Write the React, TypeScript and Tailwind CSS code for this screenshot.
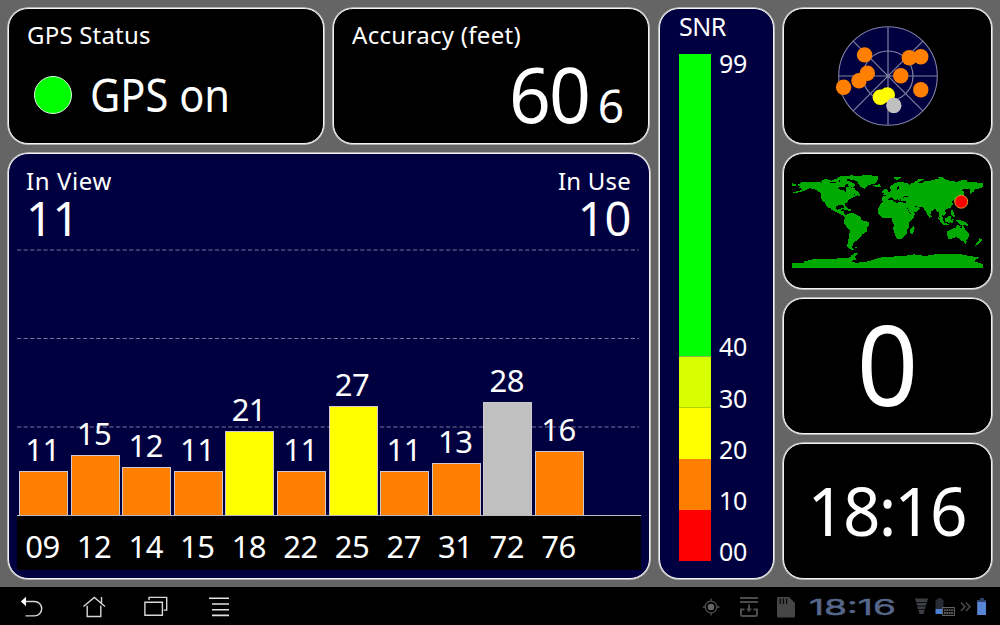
import type { ReactNode } from "react";

type Satellite = { id: string; snr: number; height: number; color: string };

const ORANGE = "#ff8000";
const YELLOW = "#ffff00";
const SILVER = "#c0c0c0";

const SATELLITES: Satellite[] = [
  { id: "09", snr: 11, height: 44, color: ORANGE },
  { id: "12", snr: 15, height: 60, color: ORANGE },
  { id: "14", snr: 12, height: 48.5, color: ORANGE },
  { id: "15", snr: 11, height: 44, color: ORANGE },
  { id: "18", snr: 21, height: 84.5, color: YELLOW },
  { id: "22", snr: 11, height: 44, color: ORANGE },
  { id: "25", snr: 27, height: 109, color: YELLOW },
  { id: "27", snr: 11, height: 44, color: ORANGE },
  { id: "31", snr: 13, height: 52.5, color: ORANGE },
  { id: "72", snr: 28, height: 113.5, color: SILVER },
  { id: "76", snr: 16, height: 64.5, color: ORANGE },
];

const SKY_DOTS = [
  { x: -23.4, y: -21.1, color: ORANGE },
  { x: 21.3, y: -18.3, color: ORANGE },
  { x: 32.8, y: -19.3, color: ORANGE },
  { x: 12.8, y: -0.3, color: ORANGE },
  { x: -20.7, y: -2.8, color: ORANGE },
  { x: -29, y: 4.7, color: ORANGE },
  { x: -44.4, y: 11.2, color: ORANGE },
  { x: 32.8, y: 13.7, color: ORANGE },
  { x: -0.7, y: 18.9, color: YELLOW },
  { x: -7.7, y: 21.2, color: YELLOW },
  { x: 5.8, y: 29.5, color: SILVER },
];

// longitude / negated latitude outlines
const LAND = [
  // North America
  "-168,-66 -162,-70 -156,-71 -141,-70 -128,-70 -115,-68 -108,-69 -96,-69 -94,-72 -88,-70 -82,-70 -82,-67 -87,-65 -94,-61 -94,-58 -88,-56 -82,-55 -81,-52 -79,-51 -77,-56 -78,-62 -72,-62 -68,-58 -64,-60 -60,-55 -56,-52 -60,-50 -66,-50 -64,-47 -60,-46 -66,-43 -70,-43 -70,-41 -74,-40 -76,-35 -81,-31 -80,-25 -82,-27 -84,-30 -90,-29 -97,-28 -98,-22 -95,-18 -91,-19 -87,-21 -89,-16 -83,-15 -83,-10 -79,-9 -77,-8 -80,-7 -86,-11 -92,-14 -97,-16 -105,-20 -106,-23 -112,-30 -114,-31 -110,-23 -115,-28 -118,-34 -123,-38 -124,-46 -123,-49 -130,-55 -137,-59 -146,-61 -152,-59 -160,-55 -165,-54 -157,-58 -165,-61 -164,-64",
  "-180,-68 -176,-67 -172,-65 -180,-65",
  "-178,-52 -170,-53 -165,-54 -170,-52.5",
  // Canadian islands
  "-125,-72 -118,-76 -110,-75 -105,-73 -115,-70",
  "-105,-73 -98,-76 -92,-75 -96,-72",
  "-90,-71 -88,-74 -78,-74 -68,-70 -61,-66 -65,-62 -74,-65 -72,-68 -80,-70",
  "-95,-77 -88,-82 -65,-83 -63,-82 -75,-78 -82,-76",
  "-87,-65 -80,-66 -82,-63 -86,-63",
  // Greenland
  "-73,-78 -60,-82 -35,-83.5 -18,-81 -20,-75 -24,-70 -38,-66 -43,-60 -50,-63 -54,-69 -58,-75",
  "-24,-65 -15,-66 -14,-64 -20,-63",
  // Caribbean
  "-85,-22 -78,-23 -74,-20 -69,-19 -69,-18 -78,-19.5",
  "-59,-48 -56,-51 -53,-47",
  // South America
  "-77,-8 -72,-12 -62,-11 -52,-5 -50,0 -44,3 -37,4.5 -35,8 -39,14 -40,21 -48,26 -53,33 -57,35 -58,38 -62,39 -65,42 -66,46 -68,51 -65,55 -71,54 -75,50 -73,40 -71,30 -70,18 -76,13 -81,5 -80,-2",
  "-61,51.5 -58,51.5 -58,52.5 -61,52.5",
  // Africa
  "-17,-21 -13,-28 -6,-36 10,-37 11,-33 20,-31 22,-33 34,-31 36,-23 39,-15 43,-11 51,-12 48,-4 40,3 40,12 35,20 35,25 31,30 26,34 19,35 15,27 12,17 13,8 9,1 9,-4 -8,-4.5 -13,-9 -17,-14",
  "44,17 49,12 50,16 47,25 44,24",
  // Eurasia
  "-9,-37 -9,-43 -2,-44 -1,-47 -5,-48 2,-51 8,-54 8,-57 11,-57 12,-54 20,-55 23,-59 30,-60 22,-61 25,-65 22,-66 17,-61 16,-57 13,-56 10,-59 5,-59 5,-62 14,-68 22,-71 30,-70 41,-67 33,-66 38,-64 44,-66 46,-68 60,-69 68,-68 70,-73 75,-72 82,-73 88,-75 104,-78 113,-74 130,-71 140,-73 160,-70 180,-69 180,-65 177,-62 170,-60 163,-58 162,-55 157,-51 156,-57 163,-62 155,-59 143,-59 136,-54 141,-52 140,-48 132,-43 128,-40 129,-35 126,-35 125,-39 118,-39 122,-37 119,-35 122,-30 118,-24 110,-21 106,-20 109,-13 105,-9 100,-13 104,-1.5 101,-3 98,-8 98,-16 94,-16 91,-22 87,-21 80,-15 80,-11 77,-8 73,-18 70,-21 67,-25 57,-26 50,-30 48,-30 52,-24 56,-24 60,-22 55,-17 45,-13 42,-17 35,-28 36,-36 27,-37 27,-40 34,-42 41,-42 38,-47 31,-46 28,-42 23,-40 23,-37 19,-42 13,-45 18,-40 15,-38 9,-44 3,-43 -2,-37 -6,-36",
  // British Isles, Japan, islands
  "-5,-50 1,-51 0,-54 -2,-58 -6,-58 -4,-54",
  "-10,-52 -6,-52 -6,-55 -10,-54",
  "52,-71 56,-71 68,-77 60,-76",
  "12,-80 26,-80 18,-77",
  "95,-80 104,-79 100,-78",
  "138,-75 150,-75 142,-73",
  "130,-31 136,-34 140,-35 142,-40 145,-44 141,-45 139,-38 132,-35",
  "142,-54 144,-49 142,-46",
  "80,-9 82,-7 80,-6",
  "95,-5 104,2 106,6 102,4",
  "105,7 115,8 115,9 106,8",
  "109,-2 117,-7 119,-5 116,4 110,3",
  "119,1 125,-1 121,2 123,5 120,5",
  "120,-18 122,-18 126,-7 122,-8",
  "131,1 141,2.5 148,6 151,10 144,8 138,8 133,4",
  // Oceania
  "114,22 122,18 129,15 132,11 137,12 136,15 140,17 142,11 146,19 153,26 151,34 147,39 140,38 135,34 131,31 124,33 116,35 114,30",
  "145,41 148,41 147,44",
  "173,35 178,38 174,42 167,47 168,44 173,40",
  // Antarctica
  "-180,82 -156,82 -156,79 -148,77 -135,74 -115,74 -100,74 -85,73 -75,73 -68,70 -67,67 -60,63 -57,63 -62,67 -61,74 -72,78 -60,82 -35,79 -20,74 -8,71 10,70 30,69 50,66 60,67 72,70 80,67 100,65 120,66 140,66 155,69 170,71 162,78 165,80 180,84 180,90 -180,90",
];

function Panel({ className, children }: { className: string; children: ReactNode }) {
  return (
    <section
      className={`rounded-[20px] border border-[#f2f2f2] shadow-[0_0_0_0.8px_#cfcfcf] ${className}`}
    >
      {children}
    </section>
  );
}

function SkyPlot() {
  return (
    <svg className="h-[104px] w-[110px]" viewBox="-55 -52 110 104">
      <circle r="49.3" fill="#000040" stroke="#8080a2" strokeWidth="1.1" />
      <g fill="none" stroke="#8080a2" strokeWidth="1.2">
        <circle r="25" />
        <path d="M0-49V49M-49 0H49M-34.8-34.8L34.8 34.8M-34.8 34.8L34.8-34.8" />
      </g>
      {SKY_DOTS.map((d, i) => (
        <circle key={i} cx={d.x} cy={d.y} r="7.7" fill={d.color} />
      ))}
    </svg>
  );
}

function WorldMap() {
  return (
    <svg className="h-[96px] w-[191px]" viewBox="-180 -90 360 180">
      <g fill="#00aa00" stroke="#00aa00" strokeWidth="2.2" shapeRendering="crispEdges">
        {LAND.map((points, i) => (
          <polygon key={i} points={points} />
        ))}
      </g>
      <circle cx="139" cy="-34.5" r="12.2" fill="#ff0000" stroke="#e0a030" strokeWidth="1.8" />
    </svg>
  );
}

function SatelliteChart() {
  return (
    <Panel className="relative h-[426px] w-[642px] bg-[#000040] text-white">
      <svg className="absolute top-0 left-0 h-[424px] w-[640px]">
        <path
          d="M8 96H630M8 184.500H630M8 273H630"
          stroke="#75759b"
          strokeWidth="1.2"
          strokeDasharray="4.2 2.4"
        />
      </svg>
      <div className="relative flex h-full flex-col">
        <div className="flex h-[86px] justify-between pt-[13px] pr-[18px] pl-[17px]">
          <div>
            <div className="text-[24px] leading-[28px] tracking-[0.6px]">In View</div>
            <div className="text-[47px] leading-[47px] tracking-[-0.3px]">11</div>
          </div>
          <div className="text-right">
            <div className="text-[24px] leading-[28px] tracking-[0.2px]">In Use</div>
            <div className="text-[47px] leading-[47px] tracking-[-0.3px]">10</div>
          </div>
        </div>
        <div className="ml-[8px] flex h-[276px] w-[624px] items-end gap-[2.6px] border-b border-[#b9b9c4] pl-[2px]">
          {SATELLITES.map((s) => (
            <div key={s.id} className="w-[49px] text-center">
              <div className="pr-[2px] text-[31px] leading-[43px] tracking-[-0.5px]">{s.snr}</div>
              <div
                className="border border-b-0 border-[#d0c8d0]"
                style={{ height: s.height, backgroundColor: s.color }}
              />
            </div>
          ))}
        </div>
        <div className="ml-[8px] flex h-[54px] w-[624px] gap-[2.6px] bg-black pl-[2px]">
          {SATELLITES.map((s) => (
            <div
              key={s.id}
              className="w-[49px] pr-[2px] text-center text-[31px] leading-[61px] tracking-[-0.5px]"
            >
              {s.id}
            </div>
          ))}
        </div>
      </div>
    </Panel>
  );
}

function SnrScale() {
  return (
    <Panel className="h-[571px] w-[115px] bg-[#000040] pl-[19px] text-white">
      <div className="h-[45px] text-[25px] leading-[34px] tracking-[-0.5px]">SNR</div>
      <div className="flex gap-[8px]">
        <div className="flex w-[32px] flex-col">
          <div className="h-[302px] bg-[#00ff00]" />
          <div className="h-[51px] border-t border-[#8fb84a] bg-[#d8ff00]" />
          <div className="h-[52px] border-t border-[#b8d000] bg-[#ffff00]" />
          <div className="h-[51px] bg-[#ff8000]" />
          <div className="h-[51px] bg-[#ff0000]" />
        </div>
        <div className="flex flex-col text-[25px] leading-[30px] tracking-[-0.3px]">
          <div className="-mt-[6px] mb-[253px]">99</div>
          <div className="mb-[21.5px]">40</div>
          <div className="mb-[21.5px]">30</div>
          <div className="mb-[21px]">20</div>
          <div className="mb-[21px]">10</div>
          <div>00</div>
        </div>
      </div>
    </Panel>
  );
}

function SystemBar() {
  return (
    <footer className="flex h-[38px] items-center justify-between bg-black">
      <div className="flex gap-[38.6px] pl-[19px]">
        <svg className="h-[38px] w-[24px]" viewBox="0 0 24 38" fill="none" stroke="#d8d8d8" strokeWidth="1.4">
          <path d="M6 14.5h9.500a7.200 7.200 0 0 1 0 14.400H6.500" />
          <path d="M1.800 14.500L7 9.800v9.400z" fill="#fff" stroke="none" />
        </svg>
        <svg className="h-[38px] w-[24px]" viewBox="0 0 24 38" fill="none" stroke="#d8d8d8" strokeWidth="1.4">
          <path d="M1.5 19.5L12.3 10.5L23 19.500M19.500 10v6M5.200 18.800v10.700h13.600V18.800" />
        </svg>
        <svg className="h-[38px] w-[24px]" viewBox="0 0 24 38" fill="none" stroke="#d8d8d8" strokeWidth="1.4">
          <path d="M.9 15.200h17.500v13H.9zM5 13v-2.600h17.700v12.700h-3" />
        </svg>
        <svg className="h-[38px] w-[24px]" viewBox="0 0 24 38" fill="none" stroke="#e0e0e0" strokeWidth="1.6">
          <path d="M2 11.300h20M5 17h17M5 22.700h17M5 28.400h17" />
        </svg>
      </div>
      <div className="flex items-center pr-[13px]">
        <svg className="mr-[19px] h-[38px] w-[18px]" viewBox="0 0 18 38" fill="none" stroke="#505050" strokeWidth="1.3">
          <circle cx="9" cy="20" r="5.8" />
          <circle cx="9" cy="20" r="3.3" fill="#666" stroke="none" />
          <path d="M9 11.5v3M9 25.500v3M.8 20h3M14.500 20h3" />
        </svg>
        <svg className="mr-[18px] h-[38px] w-[20px]" viewBox="0 0 20 38" fill="none" stroke="#4c4c4c" strokeWidth="2">
          <path d="M1 11h18M1 15h18M5.500 22.500H2v5q0 1.500 1.500 1.500h13q1.500 0 1.500-1.500v-5H14.500" />
          <path d="M10 17.500v4.500" />
          <path d="M7 21.500h6L10 25.200z" fill="#4c4c4c" stroke="none" />
        </svg>
        <svg className="mr-[14px] h-[38px] w-[18px]" viewBox="0 0 18 38">
          <path d="M1 10h11l6 6v13.500q0 1-1 1H1q-1 0-1-1V11q0-1 1-1z" fill="#464646" />
          <path d="M3.200 11.500v5.500M6.400 11.500v5.500M9.600 11.500v5.500" stroke="#0a0a0a" strokeWidth="1.3" />
        </svg>
        <svg className="mr-[18px] h-[38px] w-[87px]" viewBox="0 0 87 38">
          <text
            x="0"
            y="28"
            textLength="87"
            lengthAdjust="spacingAndGlyphs"
            className="fill-[#56678a] stroke-[#56678a] font-['Inter',sans-serif] text-[22px]"
            strokeWidth="0.4"
          >
            18:16
          </text>
        </svg>
        <svg className="mr-[5px] h-[38px] w-[15px]" viewBox="0 0 15 38">
          <path d="M1 11.500h13L9.500 27h-4z" fill="#3c3f44" />
          <path d="M0 15.500h15M0 19h15M0 22.500h15" stroke="#000" strokeWidth=".8" />
        </svg>
        <svg className="mr-[4px] h-[38px] w-[22px]" viewBox="0 0 22 38">
          <path d="M4 11h3.500v1.500h2V22H1.500v-9.500H4z" fill="#262b34" />
          <path d="M1.500 22h8v5h-8z" fill="#4a7ed2" />
          <path d="M8.500 20.500h12v8h-12z" fill="#0c0c0c" stroke="#626262" />
          <path d="M10 23.200h9M10 26h9" stroke="#808080" strokeWidth="1.3" strokeDasharray="1.6 .8" />
        </svg>
        <svg className="mr-[5px] h-[38px] w-[11px]" viewBox="0 0 11 38" fill="none" stroke="#4b4b4b" strokeWidth="1.5">
          <path d="M1 15.500l4 4.200-4 4.300M6 15.500l4 4.200-4 4.300" />
        </svg>
        <svg className="h-[38px] w-[11px]" viewBox="0 0 11 38">
          <path d="M4 11h3.500v2h2.500v15H1.200V13H4z" fill="#5985d8" />
          <path d="M4 11h3.500v2h2.500v2H1.200v-2H4z" fill="#2f4268" />
        </svg>
      </div>
    </footer>
  );
}

export default function App() {
  return (
    <div className="h-[625px] w-[1000px] overflow-hidden bg-[#656565] font-['Noto_Sans','Open_Sans',sans-serif]">
      <main className="flex h-[587px] gap-[9px] pt-[8px] pl-[8px]">
        <div className="flex w-[642px] flex-col gap-[9px]">
          <div className="flex gap-[9px]">
            <Panel className="h-[136px] w-[316px] bg-black px-[18px] pt-[12px] text-white">
              <h1 className="text-[24px] leading-[28px] tracking-[0.2px]">GPS Status</h1>
              <div className="mt-[14px] flex items-center pl-[7px]">
                <span className="size-[38px] rounded-full border border-[#d8ffd8] bg-[#00ff00]" />
                <span className="ml-[18px] origin-left scale-x-[0.925] text-[45px] leading-[64px]">
                  GPS on
                </span>
              </div>
            </Panel>
            <Panel className="h-[136px] w-[316px] bg-black pt-[12px] pl-[18px] text-white">
              <h2 className="text-[24px] leading-[28px] tracking-[0.3px]">Accuracy (feet)</h2>
              <div className="flex items-baseline justify-end pr-[24px]">
                <span className="origin-right scale-x-[0.965] text-[76px] leading-[90px] tracking-[-2px]">
                  60
                </span>
                <span className="ml-[9px] text-[46px] leading-[60px]">6</span>
              </div>
            </Panel>
          </div>
          <SatelliteChart />
        </div>
        <SnrScale />
        <div className="flex w-[209px] flex-col gap-[9px] text-white">
          <Panel className="flex h-[136px] items-center justify-center bg-black">
            <SkyPlot />
          </Panel>
          <Panel className="flex h-[136px] justify-center bg-black pt-[18px]">
            <WorldMap />
          </Panel>
          <Panel className="h-[136px] bg-black text-center text-[112px] leading-[128px]">
            <div className="scale-x-[0.96]">0</div>
          </Panel>
          <Panel className="h-[136px] bg-black text-center text-[67px] leading-[132px] tracking-[-2px]">
            <div className="-ml-[2px] scale-x-[0.98]">18:16</div>
          </Panel>
        </div>
      </main>
      <SystemBar />
    </div>
  );
}
